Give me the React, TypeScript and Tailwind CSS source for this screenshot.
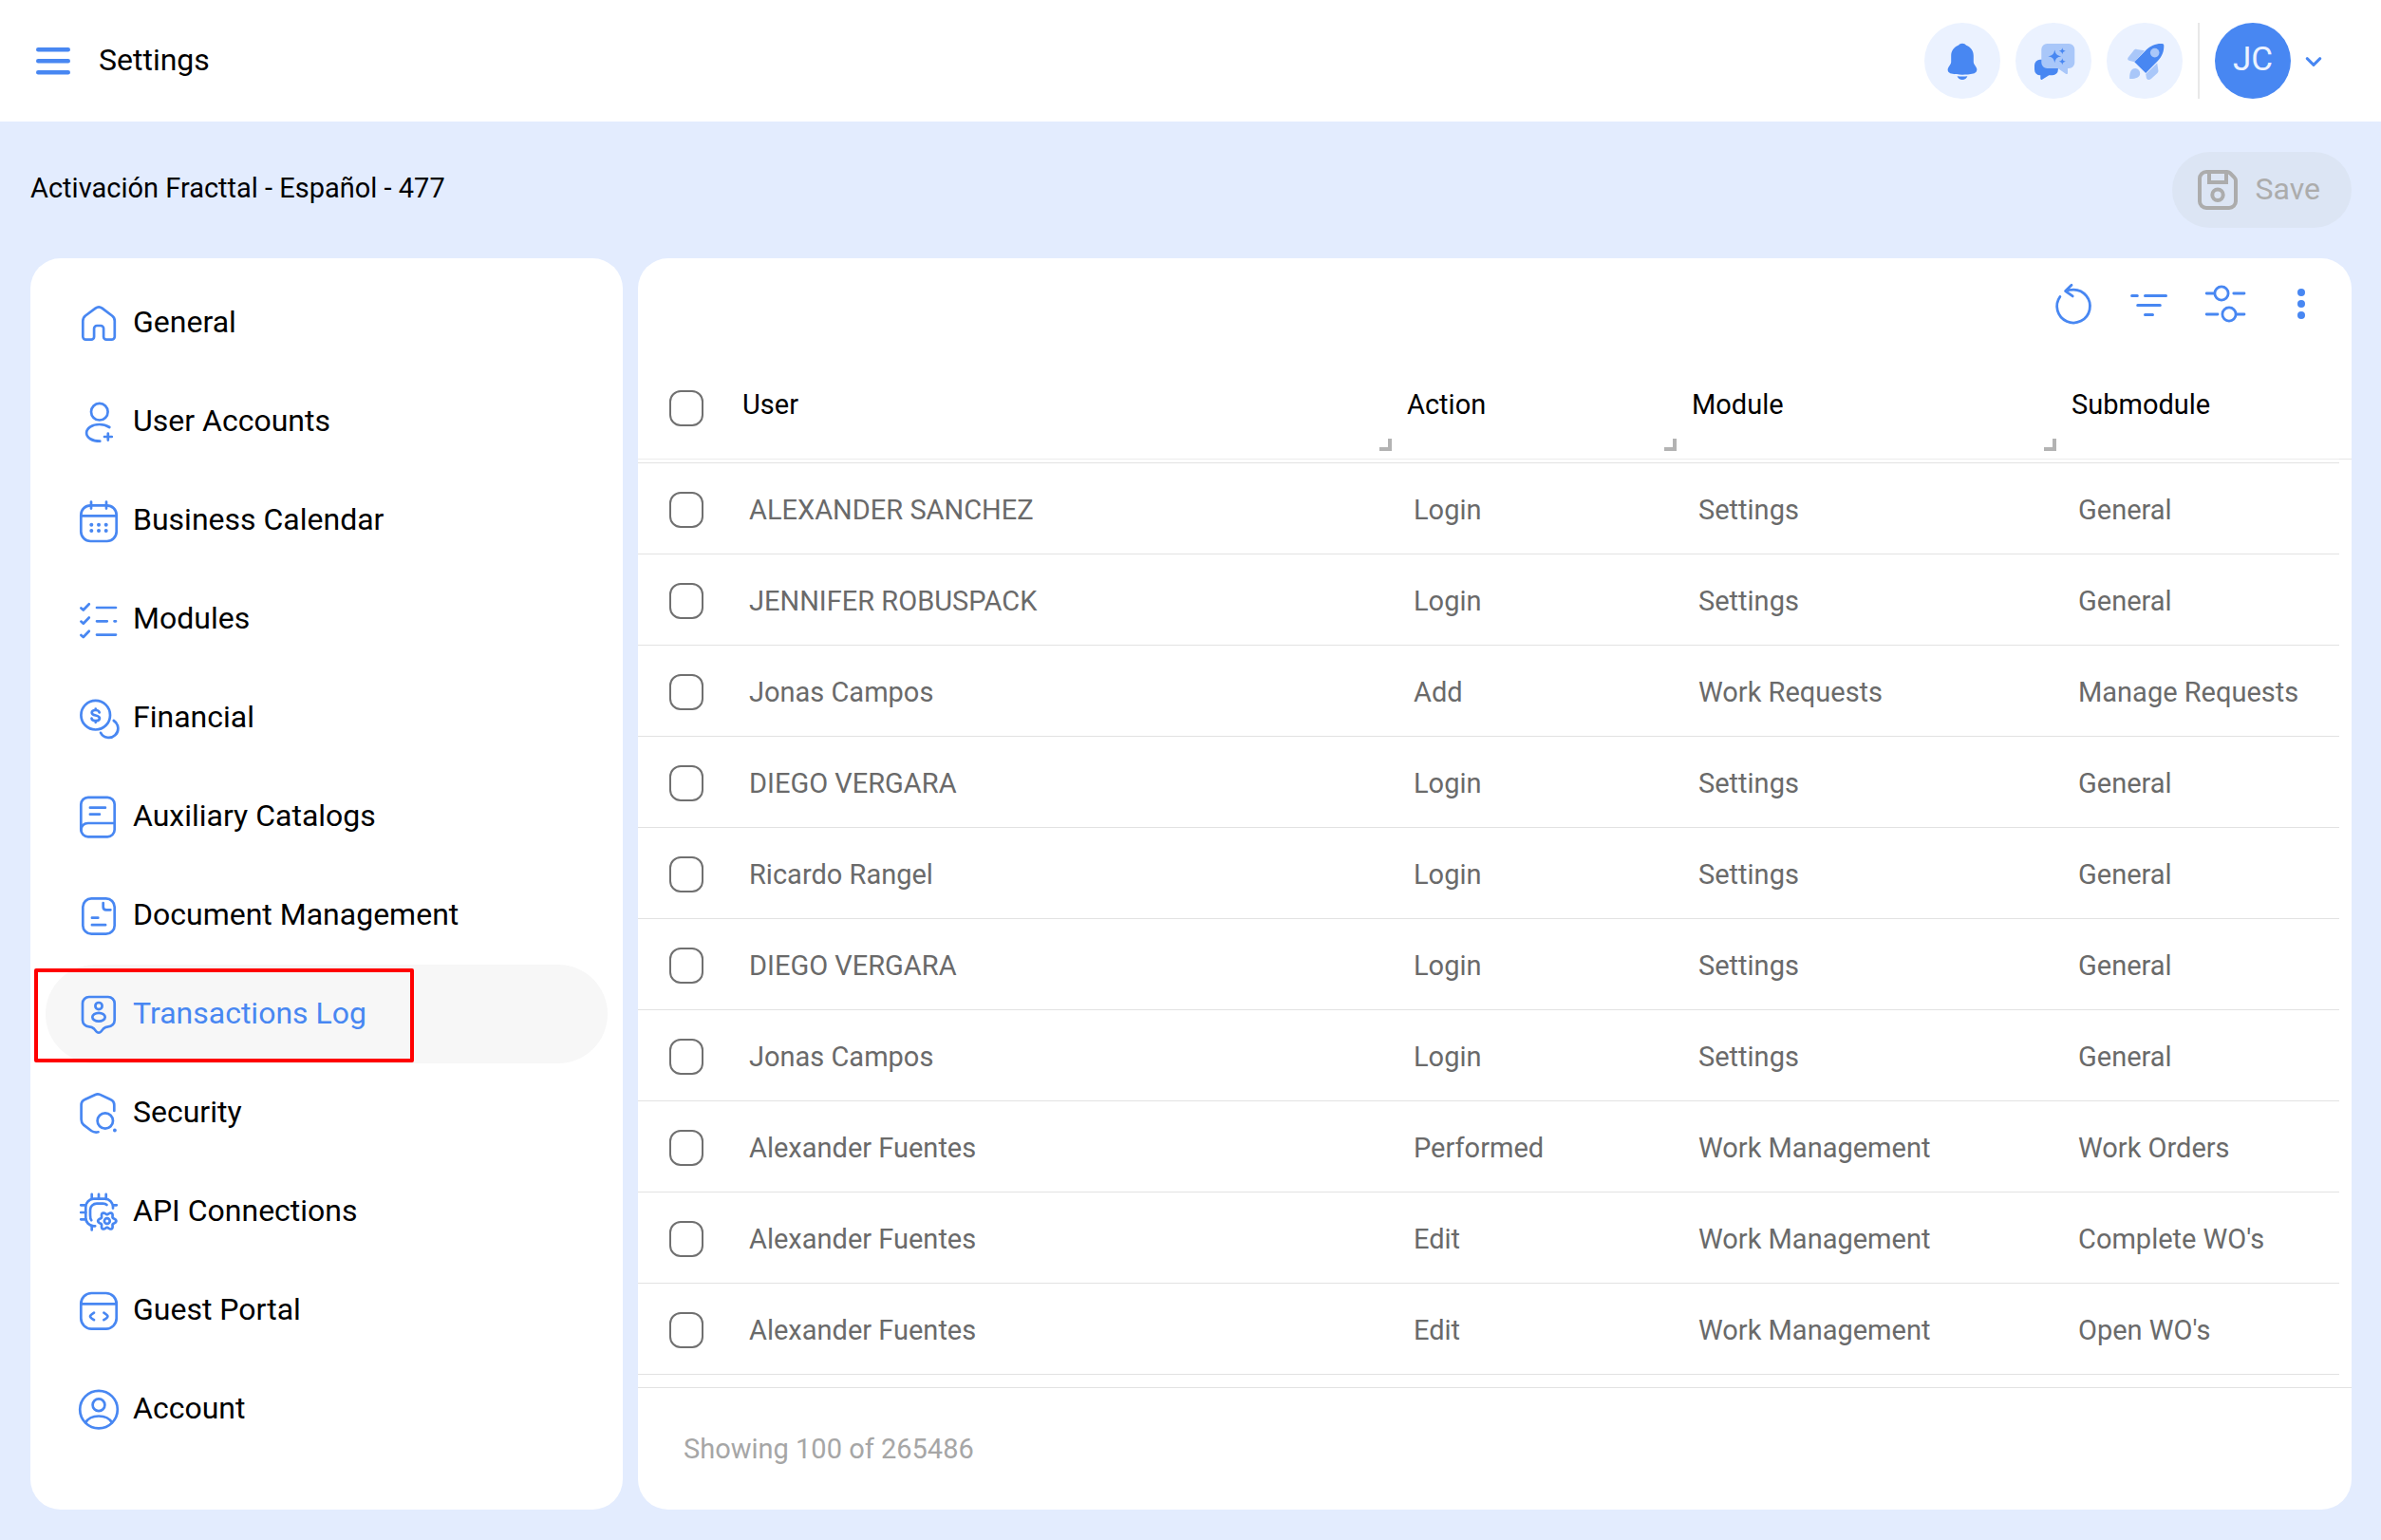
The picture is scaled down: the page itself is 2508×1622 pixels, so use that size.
import type { ReactNode } from "react";

type IconProps = { children: ReactNode; width?: number; className?: string };

function Icon({ children, width = 3, className = "" }: IconProps) {
  return (
    <svg
      viewBox="0 0 48 48"
      fill="none"
      stroke="currentColor"
      strokeWidth={width}
      strokeLinecap="round"
      strokeLinejoin="round"
      aria-hidden="true"
      className={`size-12 shrink-0 overflow-visible ${className}`}
    >
      {children}
    </svg>
  );
}

function gearPath(cx: number, cy: number, mid: number, depth: number, teeth: number) {
  const points: string[] = [];
  for (let i = 0; i < 96; i++) {
    const a = (i / 96) * Math.PI * 2;
    const r = mid + depth * Math.cos(teeth * a);
    points.push(`${(cx + r * Math.cos(a)).toFixed(2)} ${(cy + r * Math.sin(a)).toFixed(2)}`);
  }
  return `M${points.join("L")}Z`;
}

const icons = {
  home: (
    <path d="M10.5 41.7h5.6a3 3 0 0 0 3-3V30a3 3 0 0 1 3-3h4a3 3 0 0 1 3 3v8.7a3 3 0 0 0 3 3h5.4a3.3 3.3 0 0 0 3.3-3.3V22c0-2.2-1-4.2-2.8-5.5L27.6 8.7a6 6 0 0 0-7 0L10 16.5A7 7 0 0 0 7.3 22v16.4a3.2 3.2 0 0 0 3.2 3.3z" />
  ),
  userPlus: (
    <>
      <circle cx="24.8" cy="13.7" r="8.8" />
      <path d="M35.3 30c-2.8-1.8-6.5-3-10.6-3-7.6 0-13.6 4-13.6 9s6 8.7 14.2 8.7M33.8 36.6v7M30 40h7.8" />
    </>
  ),
  calendar: (
    <>
      <rect x="5.3" y="8.4" width="37.4" height="37.6" rx="10" />
      <path d="M5.3 19.3h37.4M16 4.6v7M32 4.6v7" />
      <g fill="currentColor" stroke="none">
        <circle cx="16.3" cy="28.8" r="2" />
        <circle cx="24" cy="28.8" r="2" />
        <circle cx="31.7" cy="28.8" r="2" />
        <circle cx="16.3" cy="35" r="2" />
        <circle cx="24" cy="35" r="2" />
        <circle cx="31.7" cy="35" r="2" />
      </g>
    </>
  ),
  checklist: (
    <path d="M5.4 12.4l2.4 2.1 6-6.2M5.4 26.6l2.4 2.1 6-6.2M5.4 40.9l2.4 2.1 6-6.2M22 12h20M22 26.3h10.8M40.5 26.3H42M22 40.6h20" />
  ),
  coins: (
    <>
      <circle cx="20.7" cy="21.2" r="15.3" />
      <path d="M39.8 27a9.7 9.7 0 1 1-13.7 12.8" />
      <path d="M24.7 18.4c-.3-1.6-1.9-2.4-4-2.4-2.4 0-4 1-4 2.7 0 3.8 8.2 1.8 8.2 5.7 0 1.8-1.8 2.8-4.2 2.8s-4-1-4.2-2.6M20.7 14.6v1.4M20.7 27.4v1.4" />
    </>
  ),
  book: (
    <>
      <rect x="5.3" y="3.8" width="35.4" height="41.5" rx="7.5" />
      <path d="M40.6 31H12.8c-4.4 0-7.5 2.8-7.5 7.5M14.9 14.7h16M14.9 21.7h10" />
    </>
  ),
  document: (
    <>
      <rect x="7.3" y="6.3" width="33.4" height="37.4" rx="9" />
      <path d="M28.7 11v4.2c0 1.8 1.3 3.1 3.1 3.1h4.6M16.9 26.7h6.4M16.9 34.2h14.2" />
    </>
  ),
  badge: (
    <>
      <path d="M13.8 6h20.1a6.8 6.8 0 0 1 6.8 6.8v17.7a6.8 6.8 0 0 1-6.8 6.8c-2.2 0-3.6.7-5 2.2l-2.5 3a3.2 3.2 0 0 1-4.9 0l-2.5-3c-1.4-1.5-2.9-2.2-5.2-2.2A6.8 6.8 0 0 1 7 30.5V12.8A6.8 6.8 0 0 1 13.8 6z" />
      <circle cx="24" cy="15.6" r="3.6" />
      <ellipse cx="24" cy="27.3" rx="6.7" ry="4.4" />
    </>
  ),
  shield: (
    <>
      <path d="M40.3 22v-6a6.5 6.5 0 0 0-4-6L25.4 4.9a6 6 0 0 0-5 0L9.5 10a6.5 6.5 0 0 0-3.9 6v15a8 8 0 0 0 2.6 5.9l8 6.1c2.1 1.5 4.4 1.9 7.3 1.3" />
      <circle cx="30.8" cy="32.5" r="8.2" />
      <circle cx="40.9" cy="42.5" r="1.9" fill="currentColor" stroke="none" />
    </>
  ),
  chip: (
    <>
      <path d="M39 20.6v-1.4a8.5 8.5 0 0 0-8.5-8.5H18.8a8.5 8.5 0 0 0-8.5 8.5v11.6a8.5 8.5 0 0 0 8.5 8.5h1.4" />
      <path d="M16.7 5.8v5M24 5.8v5M31.7 5.8v5M5.2 17.3h5M5.2 25h5M5.2 32.3h5M39 17.3h3.8M16.7 39v4.5" />
      <path d="M32.4 17c-1-1-2.3-1.4-3.8-1.4h-6.6a7 7 0 0 0-7 7V28c0 2.4.2 4 1.2 5.2" />
      <path d={gearPath(32.8, 34, 8.2, 1.4, 6)} />
      <circle cx="32.8" cy="34" r="2.9" />
    </>
  ),
  codeWindow: (
    <>
      <rect x="5.3" y="6" width="37.4" height="37.6" rx="11" />
      <path d="M5.3 17.4h37.4M19 26.6c-1.6 1-4 2.6-4 3.8s2.4 2.8 4 3.8M29.4 26.6c1.6 1 4 2.6 4 3.8s-2.4 2.8-4 3.8" />
    </>
  ),
  account: (
    <>
      <circle cx="24" cy="24.6" r="19.8" />
      <circle cx="24" cy="19.8" r="6.4" />
      <path d="M10.2 38.4c2.2-4.2 7.4-6.9 13.8-6.9s11.6 2.7 13.8 6.9" />
    </>
  ),
};

const navItems: { label: string; icon: ReactNode; active?: boolean }[] = [
  { label: "General", icon: icons.home },
  { label: "User Accounts", icon: icons.userPlus },
  { label: "Business Calendar", icon: icons.calendar },
  { label: "Modules", icon: icons.checklist },
  { label: "Financial", icon: icons.coins },
  { label: "Auxiliary Catalogs", icon: icons.book },
  { label: "Document Management", icon: icons.document },
  { label: "Transactions Log", icon: icons.badge, active: true },
  { label: "Security", icon: icons.shield },
  { label: "API Connections", icon: icons.chip },
  { label: "Guest Portal", icon: icons.codeWindow },
  { label: "Account", icon: icons.account },
];

const columns = ["User", "Action", "Module", "Submodule"];

const rows = [
  ["ALEXANDER SANCHEZ", "Login", "Settings", "General"],
  ["JENNIFER ROBUSPACK", "Login", "Settings", "General"],
  ["Jonas Campos", "Add", "Work Requests", "Manage Requests"],
  ["DIEGO VERGARA", "Login", "Settings", "General"],
  ["Ricardo Rangel", "Login", "Settings", "General"],
  ["DIEGO VERGARA", "Login", "Settings", "General"],
  ["Jonas Campos", "Login", "Settings", "General"],
  ["Alexander Fuentes", "Performed", "Work Management", "Work Orders"],
  ["Alexander Fuentes", "Edit", "Work Management", "Complete WO's"],
  ["Alexander Fuentes", "Edit", "Work Management", "Open WO's"],
];

function TopBar() {
  return (
    <header className="flex h-32 items-center bg-white pl-8 pr-[47px]">
      <button type="button" aria-label="Toggle menu" className="text-[#4887f2]">
        <Icon width={4.4}>
          <path d="M8.2 12.3h31.6M8.2 24.3h31.6M8.2 36.3h31.6" />
        </Icon>
      </button>
      <h1 className="ml-6 flex-1 pb-0.5 text-[32px] leading-10">Settings</h1>
      <div className="flex items-center">
        <div className="flex gap-4">
          <button type="button" aria-label="Notifications" className="flex size-20 items-center justify-center rounded-full bg-[#ebf2ff]">
            <Icon>
              <g fill="#4887f2" stroke="none">
                <path d="M24 5.8c2 0 3 .8 4.2 2 4.700 1.8 7.6 5.8 7.6 11v6.5c0 1 .3 1.7.8 2.5l1.9 3c2 3.2.3 6-3 6.8-7 1.6-16 1.6-23 0-3.300-.8-5-3.600-3-6.800l1.900-3c.5-.8.8-1.500.8-2.500v-6.500c0-5.200 2.900-9.200 7.600-11 1.200-1.200 2.200-2 4.200-2z" />
                <path d="M18.6 40.3c3.5.4 7.300.4 10.800 0-.8 2.200-2.900 3.700-5.400 3.700s-4.600-1.500-5.400-3.700z" />
              </g>
            </Icon>
          </button>
          <button type="button" aria-label="Assistant chat" className="flex size-20 items-center justify-center rounded-full bg-[#ebf2ff]">
            <Icon>
              <g stroke="none">
                <path
                  fill="#4887f2"
                  d="M10 22.700h12a6 6 0 0 1 6.900 6v4.600a6 6 0 0 1-6 6h-3.600l-7.200 4.500c-.8.5-1.800 0-1.800-1v-3.500A6 6 0 0 1 4 33.300v-4.600a6 6 0 0 1 6-6z"
                />
                <path
                  fill="#a9c7f9"
                  d="M17.300 6h23a6 6 0 0 1 6 6v14a6 6 0 0 1-6 6H39v5c0 .9-.9 1.400-1.700.9L28.600 32H17.300a6 6 0 0 1-6-6V12a6 6 0 0 1 6-6z"
                />
                <path
                  fill="#4887f2"
                  d="M25.300 12.400c1 4.600 2.300 5.900 6.900 6.900-4.600 1-5.900 2.300-6.900 6.900-1-4.600-2.300-5.900-6.900-6.900 4.600-1 5.900-2.300 6.900-6.900zM33.300 10.200c.5 2.300 1.200 3 3.500 3.500-2.300.5-3 1.200-3.500 3.500-.5-2.300-1.200-3-3.500-3.500 2.300-.5 3-1.200 3.500-3.500zM33.300 21.200c.5 2.300 1.200 3 3.500 3.500-2.300.5-3 1.200-3.500 3.500-.5-2.300-1.200-3-3.500-3.500 2.300-.5 3-1.200 3.500-3.500z"
                />
              </g>
            </Icon>
          </button>
          <button type="button" aria-label="What's new" className="flex size-20 items-center justify-center rounded-full bg-[#ebf2ff]">
            <Icon>
              <g stroke="none">
                <g fill="#a9c7f9">
                  <path d="M24 13.200l-10.700 12-5-1.200c-2-.4-2.800-1.700-1.600-3.400l5.600-7.200c.8-1.200 2-1.700 3.400-1.500z" />
                  <path d="M37.200 26.500l1.200 7.500c.2 1.400-.2 2.400-1.200 3.300l-6.300 5.700c-2 1.700-4.200 1.200-5-.8L25.200 38z" />
                  <path d="M8.200 43c-.2-5 .6-11 6.100-11.100a5.400 5.400 0 0 1 4.900 5.600c-.2 4.400-5.500 5.800-11 5.500z" />
                </g>
                <path fill="#4887f2" d="M13.300 25.300L26 12.300C30 8.200 36.500 5.500 42.500 6c1.200.1 1.700.6 1.800 1.800.3 6-2 12-6.300 16.300L25.200 37z" />
                <circle cx="34.7" cy="15.6" r="4.8" fill="#a9c7f9" />
              </g>
            </Icon>
          </button>
        </div>
        <div className="mx-4 h-20 w-0.5 bg-[#e8e8e8]" />
        <button type="button" aria-label="User menu" className="flex items-center text-[#4887f2]">
          <span className="flex size-20 items-center justify-center rounded-full bg-[#4887f2] pb-0.5 text-[35px] leading-10 text-[#ebf2ff]">
            JC
          </span>
          <Icon width={3}>
            <path d="M17.2 21.7l6.8 6.6 6.8-6.6" />
          </Icon>
        </button>
      </div>
    </header>
  );
}

function Sidebar() {
  return (
    <nav aria-label="Settings sections" className="w-[624px] shrink-0 rounded-[32px] bg-white p-4">
      <ul>
        {navItems.map((item) => (
          <li key={item.label} className="relative">
            <a
              href="#"
              aria-current={item.active ? "page" : undefined}
              className={
                item.active
                  ? "flex h-[104px] items-center gap-3 rounded-full bg-[#f7f7f7] px-8 text-[32px] leading-10 text-[#4887f2]"
                  : "flex h-[104px] items-center gap-3 rounded-full px-8 text-[32px] leading-10 text-black"
              }
            >
              <Icon width={2.7} className="text-[#4887f2]">
                {item.icon}
              </Icon>
              <span className="pb-0.5">{item.label}</span>
            </a>
            {item.active && (
              <span className="pointer-events-none absolute -left-3 top-1 h-[99px] w-[400px] rounded-xs border-4 border-[#ff0000]" />
            )}
          </li>
        ))}
      </ul>
    </nav>
  );
}

function Toolbar() {
  const button = "flex h-20 w-20 items-center justify-center";
  return (
    <div className="flex h-24 items-center justify-end pr-[13px] text-[#4887f2]">
      <button type="button" aria-label="Refresh" className={button}>
        <Icon width={2.8}>
          <path d="M9.9 16.5A17.4 17.4 0 1 0 24.2 9.200c-3 0-5.600.2-8.600 1.400M22 4.300l-6.400 6.300 7.600 5.300" />
        </Icon>
      </button>
      <button type="button" aria-label="Filter" className={button}>
        <Icon width={3}>
          <path d="M5.6 15.4h5.7M19.5 15.4h22M11.7 25.4h23.6M19.5 35.4h8" />
        </Icon>
      </button>
      <button type="button" aria-label="Adjust columns" className={button}>
        <Icon width={2.8}>
          <circle cx="20" cy="13" r="7.1" />
          <circle cx="28" cy="35" r="7.1" />
          <path d="M4.2 13h8M32.8 13h11.200M4.200 35h11.800M36 35h8" />
        </Icon>
      </button>
      <button type="button" aria-label="More options" className={button}>
        <Icon>
          <g fill="currentColor" stroke="none">
            <circle cx="24" cy="12" r="4" />
            <circle cx="24" cy="24" r="4" />
            <circle cx="24" cy="36" r="4" />
          </g>
        </Icon>
      </button>
    </div>
  );
}

function Checkbox({ label }: { label: string }) {
  return (
    <input
      type="checkbox"
      aria-label={label}
      className="block h-[38px] w-9 appearance-none rounded-xl border-2 border-[#707070] bg-white checked:bg-[#4887f2]"
    />
  );
}

function LogTable() {
  return (
    <table className="w-full table-fixed border-separate border-spacing-0 text-[29px] leading-9">
      <colgroup>
        <col className="w-[101px]" />
        <col className="w-[700px]" />
        <col className="w-[300px]" />
        <col className="w-[400px]" />
        <col />
        <col className="w-[13px]" />
      </colgroup>
      <thead>
        <tr className="h-[116px]">
          <th className="border-b border-[#ececec] p-0 pl-[33px] pt-2">
            <Checkbox label="Select all rows" />
          </th>
          {columns.map((name, i) => (
            <th key={name} scope="col" className="relative border-b border-[#ececec] p-0 pl-[9px] text-left font-normal">
              {name}
              {i < columns.length - 1 && (
                <span className="absolute bottom-2 right-[7px] size-[13px] border-b-4 border-r-4 border-[#b3b3b3]" />
              )}
            </th>
          ))}
          <td className="border-b border-[#e6e6e6] p-0" />
        </tr>
      </thead>
      <tbody className="text-[#6a6a6a]">
        <tr className="h-1">
          <td colSpan={5} className="border-b border-[#e2e2e2] p-0" />
          <td className="p-0" />
        </tr>
        {rows.map((row, i) => (
          <tr key={i} className="h-24">
            <td className="border-b border-[#e2e2e2] p-0 pl-[33px] pt-0.5">
              <Checkbox label={`Select row ${i + 1}`} />
            </td>
            {row.map((value, j) => (
              <td key={j} className="border-b border-[#e2e2e2] p-0 pl-4 pt-0.5">
                {value}
              </td>
            ))}
            <td className="p-0" />
          </tr>
        ))}
      </tbody>
    </table>
  );
}

export default function App() {
  return (
    <div className="flex min-h-screen flex-col bg-[#e3ecfe] font-['Roboto',sans-serif] text-black">
      <TopBar />
      <main className="flex flex-col gap-8 py-8 pl-8 pr-[31px]">
        <div className="flex h-20 items-center justify-between">
          <p className="pb-1 text-[29px] leading-9">Activación Fracttal - Español - 477</p>
          <button
            type="button"
            disabled
            className="flex h-20 items-center gap-4 rounded-full bg-[#dce5f4] pl-6 pr-[33px] text-[32px] leading-10 text-[#acacac]"
          >
            <Icon width={4}>
              <path d="M12 5h21.5c1.500 0 2.700.5 3.700 1.500l4.300 4.300c1 1 1.500 2.200 1.500 3.700V36a7 7 0 0 1-7 7H12a7 7 0 0 1-7-7V12a7 7 0 0 1 7-7z" />
              <path d="M15 5v11h18V5" strokeLinejoin="miter" />
              <circle cx="24" cy="29.3" r="5.7" />
            </Icon>
            <span className="pb-0.5">Save</span>
          </button>
        </div>
        <div className="flex gap-4">
          <Sidebar />
          <section aria-label="Transactions log" className="min-w-0 flex-1 overflow-hidden rounded-[32px] bg-white">
            <Toolbar />
            <LogTable />
            <footer className="mt-[13px] flex h-[129px] items-center border-t border-[#e2e2e2] pl-12 text-[29px] leading-9 text-[#a6a6a6]">
              Showing 100 of 265486
            </footer>
          </section>
        </div>
      </main>
    </div>
  );
}
